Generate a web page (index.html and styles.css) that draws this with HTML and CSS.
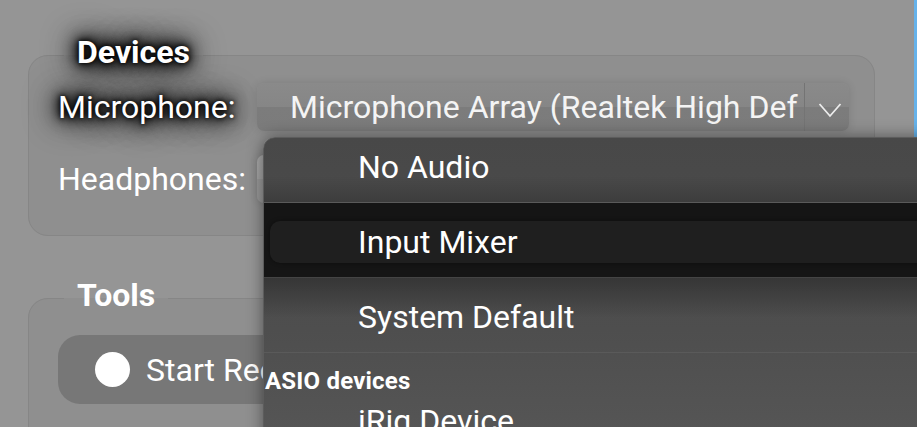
FILE: index.html
```html
<!DOCTYPE html>
<html lang="en">
<head>
<meta charset="utf-8">
<title>Devices</title>
<link rel="stylesheet" href="styles.css">
</head>
<body>
<div class="app">
  <main class="content">
    <fieldset class="group">
      <legend class="group-title glow">Devices</legend>
      <div class="field">
        <label class="field-label glow">Microphone:</label>
        <div class="select">
          <span class="select-value">Microphone Array (Realtek High Def</span>
          <span class="select-arrow">
            <svg width="24" height="16" viewBox="0 0 24 16"><polyline points="1.5,2 12,14 22.5,2" fill="none" stroke="#ececec" stroke-width="1.8"/></svg>
          </span>
        </div>
      </div>
      <div class="field">
        <label class="field-label">Headphones:</label>
        <div class="select select-light">
          <span class="select-value">Speakers (Realtek High Definition Audio)</span>
          <span class="select-arrow"></span>
        </div>
      </div>
    </fieldset>
    <fieldset class="group group-tools">
      <legend class="group-title">Tools</legend>
      <button class="record" type="button"><span class="record-dot"></span><span class="record-label">Start Recording</span></button>
    </fieldset>
  </main>
  <div class="accent"></div>
  <div class="popup">
    <div class="options">
      <div class="option option-before">No Audio</div>
      <div class="option option-selected"><div class="option-highlight">Input Mixer</div></div>
      <div class="option option-after">System Default</div>
      <div class="option-group">ASIO devices</div>
      <div class="option option-grouped">iRig Device</div>
    </div>
  </div>
</div>
</body>
</html>
```

FILE: styles.css
```css
html, body {
  margin: 0;
  padding: 0;
  height: 100%;
  overflow: hidden;
  background: #959595;
}

body {
  font-family: Roboto, "Noto Sans", sans-serif;
  font-size: 32px;
  color: #fff;
}

.app {
  position: relative;
  display: flex;
  height: 427px;
  overflow: hidden;
}

.content {
  flex: 1;
  min-width: 0;
  padding: 33px 39px 0 28px;
}

.accent {
  width: 3px;
  flex: none;
  background: #66b2ea;
}

.group {
  margin: 0;
  padding: 6px 25px 32px 29px;
  border: 1px solid #868686;
  border-radius: 20px;
  background: #8f8f8f;
  min-width: 0;
}

.group-tools {
  margin-top: 40px;
  padding-top: 15px;
  height: 200px;
}

.group-title {
  margin-left: 6px;
  padding: 0 13px 6px;
  font-weight: 700;
  font-size: 32px;
}

.glow {
  text-shadow: 0 0 4px #000, 0 0 9px #000, 0 0 14px #000, 0 0 20px #000, 0 0 28px #000, 0 0 36px #000;
}

.field {
  display: flex;
  align-items: center;
  height: 48px;
  min-width: 0;
}

.field + .field {
  margin-top: 24px;
}

.field-label {
  width: 199px;
  flex: none;
}

.select {
  flex: 1;
  min-width: 0;
  display: flex;
  height: 48px;
  border-radius: 7px;
  background: linear-gradient(#8a8a8a 0, #868686 50%, #7c7c7c 50%, #7b7b7b 100%);
  box-shadow: 0 0 8px rgba(0,0,0,.12);
  overflow: hidden;
}

.select-light {
  background: linear-gradient(#a9a9a9 0, #a4a4a4 50%, #9a9a9a 50%, #989898 100%);
}

.select-value {
  flex: 1;
  min-width: 0;
  padding-left: 33px;
  line-height: 48px;
  white-space: nowrap;
  overflow: hidden;
  color: #f4f4f4;
}

.select-arrow {
  width: 45px;
  flex: none;
  display: flex;
  align-items: center;
  justify-content: center;
  padding: 5px 0 0 6px;
  box-sizing: border-box;
  border-left: 1px solid #747474;
}

.record {
  display: flex;
  align-items: center;
  height: 69px;
  padding: 0 40px 0 37px;
  border: none;
  border-radius: 22px;
  background: #777;
  color: #fff;
  font: inherit;
  gap: 16px;
}

.record-dot {
  width: 35px;
  height: 35px;
  border-radius: 50%;
  background: #fff;
}

.popup {
  position: absolute;
  left: 263px;
  top: 137px;
  width: 680px;
  height: 320px;
  border: 1px solid #5c5c5c;
  border-radius: 12px 0 0 0;
  background: linear-gradient(#484848, #4e4e4e 60%, #575757);
  box-shadow: 0 0 16px rgba(0,0,0,.45);
  overflow: hidden;
}

.options {
  margin-top: -10px;
}

.option {
  display: flex;
  align-items: center;
  padding: 3px 0 0 94px;
  box-sizing: border-box;
  height: 75px;
  border-bottom: 1px solid #5a5a5a;
}

.option-before {
  background: linear-gradient(rgba(0,0,0,0) 65%, rgba(0,0,0,.18));
}

.option-selected {
  padding: 3px 0 0 6px;
  background: #151515;
  border-bottom-color: #444;
}

.option-highlight {
  flex: 1;
  display: flex;
  align-items: center;
  height: 42px;
  padding-left: 88px;
  border-radius: 10px;
  background: #1f1f1f;
  box-shadow: 0 0 4px rgba(0,0,0,.4);
}

.option-after {
  background: linear-gradient(#363636, rgba(0,0,0,0) 40px);
}

.option-group {
  padding: 14px 0 0 1px;
  font-size: 24px;
  font-weight: 700;
  letter-spacing: 0.2px;
}

.option-grouped {
  align-items: flex-start;
  padding-top: 7px;
  border-bottom: none;
}
```
